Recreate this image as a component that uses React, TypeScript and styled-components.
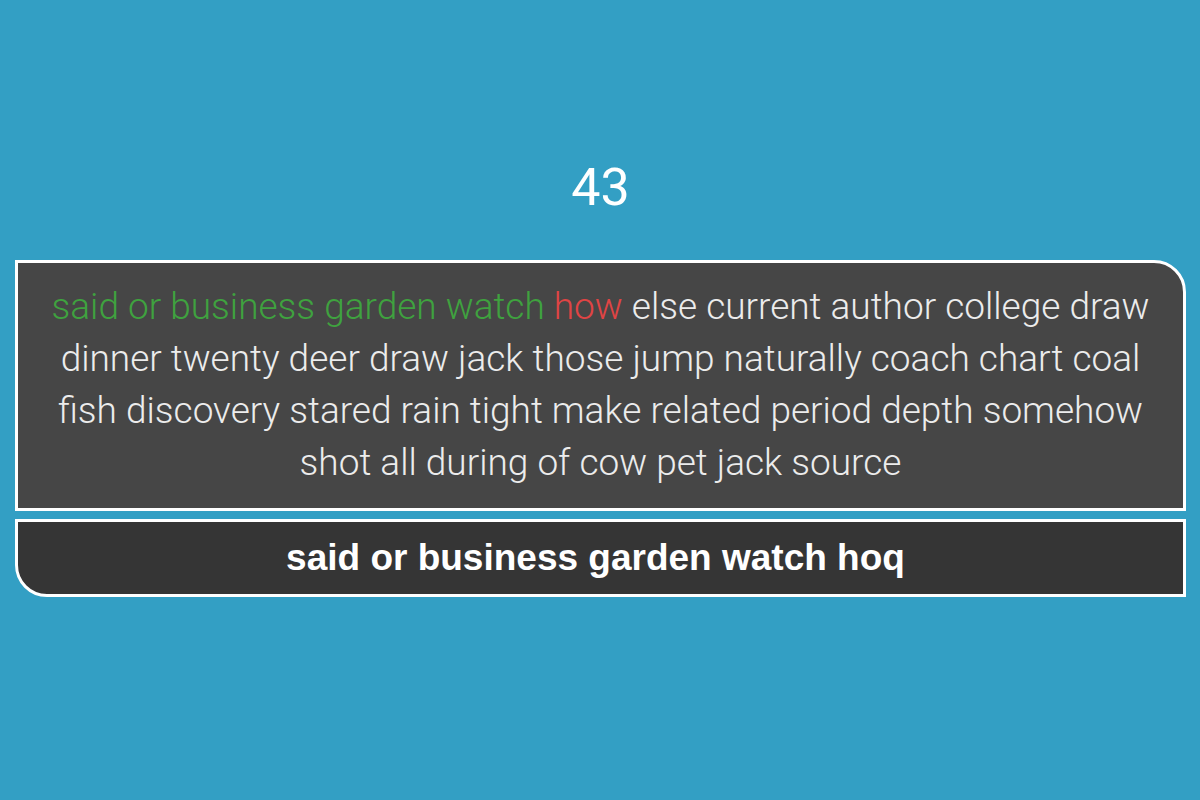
import React from "react";
import styled, { createGlobalStyle } from "styled-components";

const Global = createGlobalStyle`
  html, body { margin: 0; padding: 0; background: #339fc4; }
  body { width: 1200px; height: 800px; overflow: hidden; font-family: Roboto, "Liberation Sans", sans-serif; }
`;

const Page = styled.div`
  display: flex;
  flex-direction: column;
  align-items: stretch;
  padding: 158px 14px 0 15px;
`;

const Counter = styled.div`
  color: #ffffff;
  font-family: Roboto, sans-serif;
  font-size: 52px;
  font-weight: 400;
  text-align: center;
  line-height: 60px;
  margin-bottom: 42px;
`;

const TextBox = styled.div`
  background: #464646;
  border: 3px solid #ffffff;
  border-top-right-radius: 32px;
  padding: 18px 14px 19px;
  text-align: center;
  font-family: Roboto, sans-serif;
  font-weight: 300;
  font-size: 37px;
  line-height: 52px;
  color: #ececec;
`;

const Word = styled.span<{ $state?: "ok" | "bad" | "none" }>`
  color: ${(p) => (p.$state === "ok" ? "#3fa23f" : p.$state === "bad" ? "#e04444" : "#ececec")};
`;

const InputBox = styled.div`
  margin-top: 8px;
  background: #353535;
  border: 3px solid #ffffff;
  border-bottom-left-radius: 32px;
  height: 72px;
  padding-right: 10px;
  display: flex;
  align-items: center;
  justify-content: center;
  color: #ffffff;
  font-family: "Liberation Sans", Arial, sans-serif;
  font-weight: 700;
  font-size: 37px;
`;

const typed = ["said", "or", "business", "garden", "watch"];
const wrong = "how";
const rest =
  "else current author college draw dinner twenty deer draw jack those jump naturally coach chart coal fish discovery stared rain tight make related period depth somehow shot all during of cow pet jack source".split(
    " "
  );

export default function App() {
  return (
    <>
      <Global />
      <Page>
        <Counter>43</Counter>
        <TextBox>
          {typed.map((w, i) => (
            <React.Fragment key={"t" + i}>
              <Word $state="ok">{w}</Word>{" "}
            </React.Fragment>
          ))}
          <Word $state="bad">{wrong}</Word>{" "}
          {rest.map((w, i) => (
            <React.Fragment key={"r" + i}>
              <Word>{w}</Word>{i < rest.length - 1 ? " " : ""}
            </React.Fragment>
          ))}
        </TextBox>
        <InputBox>said or business garden watch hoq</InputBox>
      </Page>
    </>
  );
}
